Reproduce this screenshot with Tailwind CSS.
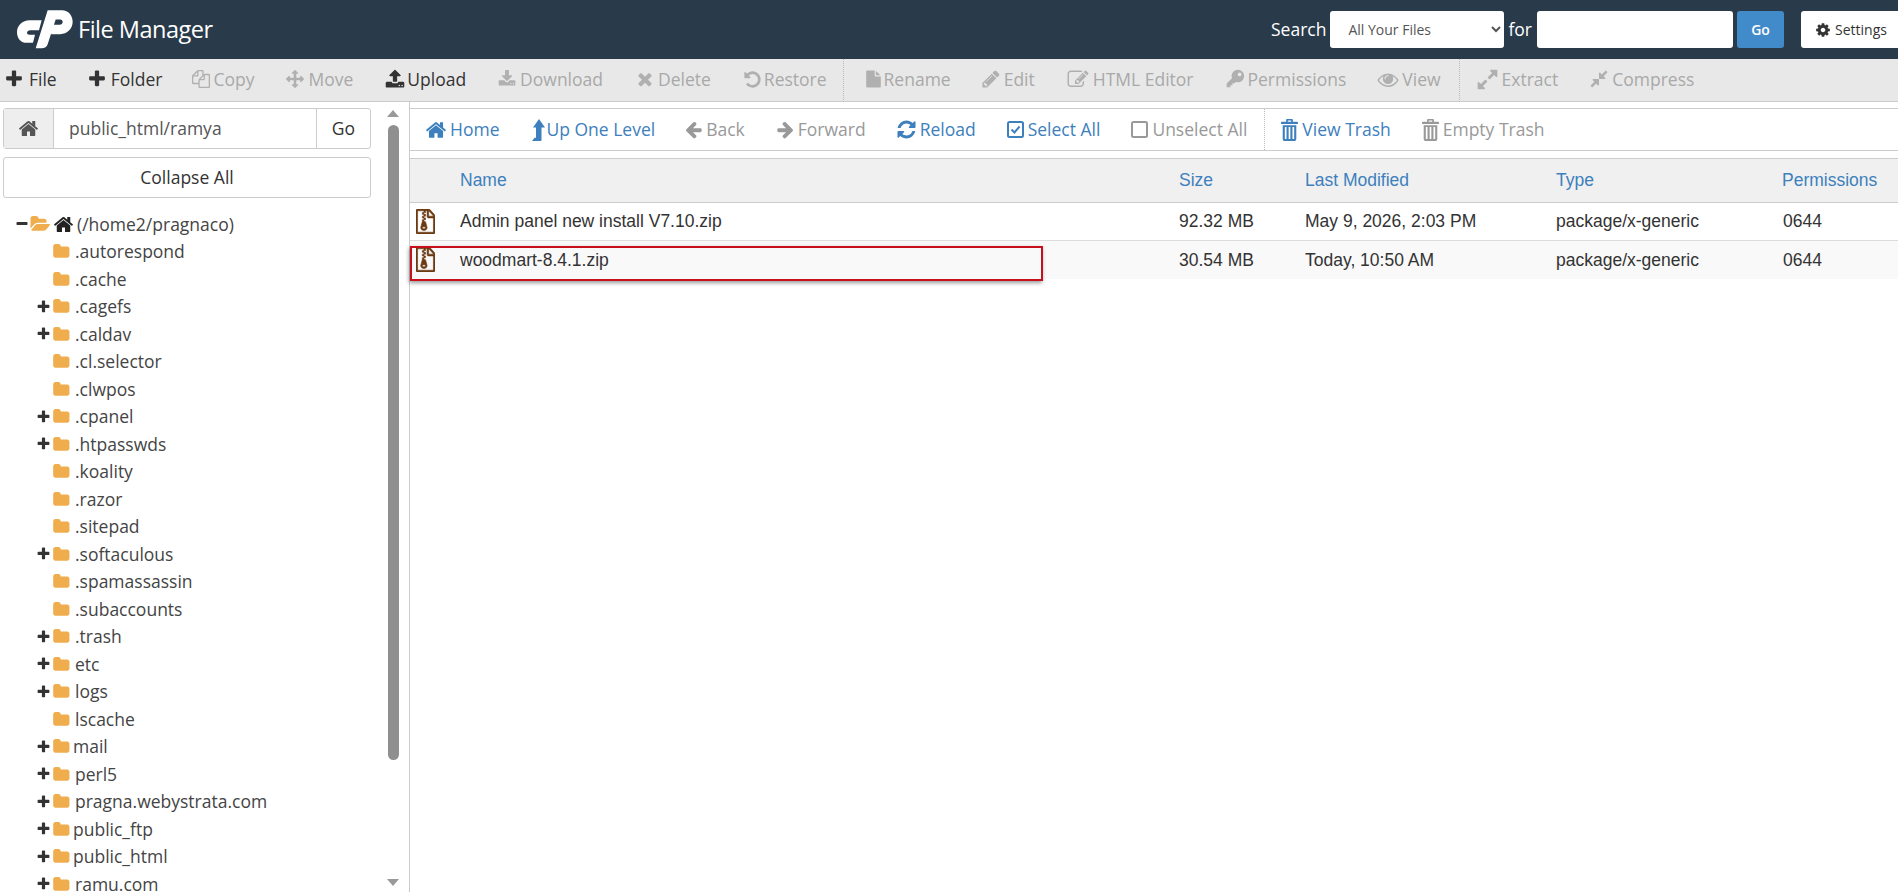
<!DOCTYPE html>
<html lang="en">
<head>
  <meta charset="UTF-8" />
  <title>File Manager</title>
  <script src="https://cdn.jsdelivr.net/npm/@tailwindcss/browser@4"></script>
</head>
<body class="bg-white h-screen overflow-hidden font-['Open_Sans',sans-serif] text-[#333]">

  <!-- icon sprite -->
  <svg class="hidden">
    <symbol id="home" viewBox="0 0 1792 1792"><path d="M1472 992v480q0 26-19 45t-45 19h-384v-384h-256v384h-384q-26 0-45-19t-19-45v-480q0-1 .5-3t.5-3l575-474 575 474q1 2 1 6zm223-69l-62 74q-8 9-21 11h-3q-13 0-21-7l-692-577-692 577q-12 8-24 7-13-2-21-11l-62-74q-8-10-7-23.500t11-21.500l719-599q32-26 76-26t76 26l244 204v-195q0-14 9-23t23-9h192q14 0 23 9t9 23v408l219 182q10 8 11 21.500t-7 23.500z"/></symbol>
    <symbol id="plus" viewBox="0 0 1792 1792"><path d="M1600 736v192q0 40-28 68t-68 28h-416v416q0 40-28 68t-68 28h-192q-40 0-68-28t-28-68v-416h-416q-40 0-68-28t-28-68v-192q0-40 28-68t68-28h416v-416q0-40 28-68t68-28h192q40 0 68 28t28 68v416h416q40 0 68 28t28 68z"/></symbol>
    <symbol id="minus" viewBox="0 0 1792 1792"><path d="M1600 736v192q0 40-28 68t-68 28h-1216q-40 0-68-28t-28-68v-192q0-40 28-68t68-28h1216q40 0 68 28t28 68z"/></symbol>
    <symbol id="folder" viewBox="0 0 1728 1536"><path transform="translate(0 -128)" d="M1728 608v704q0 92-66 158t-158 66h-1216q-92 0-158-66t-66-158v-960q0-92 66-158t158-66h320q92 0 158 66t66 158v32h672q92 0 158 66t66 158z"/></symbol>
    <symbol id="folder-open" viewBox="0 0 1920 1536"><path transform="translate(0 -128)" d="M1879 952q0 31-31 66l-336 396q-43 51-120.500 86.500t-143.500 35.500h-1088q-34 0-60.500-13t-26.500-43q0-31 31-66l336-396q43-51 120.500-86.500t143.500-35.500h1088q34 0 60.500 13t26.500 43zm-343-344v160h-832q-94 0-197 47.500t-164 119.500l-337 396-5 6q0-4-.5-12.500t-.5-12.500v-960q0-92 66-158t158-66h320q92 0 158 66t66 158v32h544q92 0 158 66t66 158z"/></symbol>
    <symbol id="copy" viewBox="0 0 1792 1792"><path d="M1696 384q40 0 68 28t28 68v1216q0 40-28 68t-68 28h-960q-40 0-68-28t-28-68v-288h-544q-40 0-68-28t-28-68v-672q0-40 20-88t48-76l408-408q28-28 76-48t88-20h416q40 0 68 28t28 68v328q68-40 128-40h416zm-544 213l-299 299h299v-299zm-640-384l-299 299h299v-299zm196 647l316-316v-416h-384v416q0 40-28 68t-68 28h-416v640h512v-256q0-40 20-88t48-76zm956 804v-1152h-384v416q0 40-28 68t-68 28h-416v640h896z"/></symbol>
    <symbol id="move" viewBox="0 0 1792 1792"><path d="M1792 896q0 26-19 45l-256 256q-19 19-45 19t-45-19-19-45v-128h-384v384h128q26 0 45 19t19 45-19 45l-256 256q-19 19-45 19t-45-19l-256-256q-19-19-19-45t19-45 45-19h128v-384h-384v128q0 26-19 45t-45 19-45-19l-256-256q-19-19-19-45t19-45l256-256q19-19 45-19t45 19 19 45v128h384v-384h-128q-26 0-45-19t-19-45 19-45l256-256q19-19 45-19t45 19l256 256q19 19 19 45t-19 45-45 19h-128v384h384v-128q0-26 19-45t45-19 45 19l256 256q19 19 19 45z"/></symbol>
    <symbol id="upload" viewBox="0 0 1792 1792"><path d="M1344 1472q0-26-19-45t-45-19-45 19-19 45 19 45 45 19 45-19 19-45zm256 0q0-26-19-45t-45-19-45 19-19 45 19 45 45 19 45-19 19-45zm128-224v320q0 40-28 68t-68 28h-1472q-40 0-68-28t-28-68v-320q0-40 28-68t68-28h427q21 56 70.500 92t110.500 36h256q61 0 110.500-36t70.500-92h427q40 0 68 28t28 68zm-325-648q-17 40-59 40h-256v448q0 26-19 45t-45 19h-256q-26 0-45-19t-19-45v-448h-256q-42 0-59-40-17-39 14-69l448-448q18-19 45-19t45 19l448 448q31 30 14 69z"/></symbol>
    <symbol id="download" viewBox="0 0 1792 1792"><path d="M1344 1344q0-26-19-45t-45-19-45 19-19 45 19 45 45 19 45-19 19-45zm256 0q0-26-19-45t-45-19-45 19-19 45 19 45 45 19 45-19 19-45zm128-224v320q0 40-28 68t-68 28h-1472q-40 0-68-28t-28-68v-320q0-40 28-68t68-28h465l135 136q58 56 136 56t136-56l136-136h464q40 0 68 28t28 68zm-325-569q17 41-14 70l-448 448q-18 19-45 19t-45-19l-448-448q-31-29-14-70 17-39 59-39h256v-448q0-26 19-45t45-19h256q26 0 45 19t19 45v448h256q42 0 59 39z"/></symbol>
    <symbol id="times" viewBox="0 0 1792 1792"><path d="M1490 1322q0 40-28 68l-136 136q-28 28-68 28t-68-28l-294-294-294 294q-28 28-68 28t-68-28l-136-136q-28-28-28-68t28-68l294-294-294-294q-28-28-28-68t28-68l136-136q28-28 68-28t68 28l294 294 294-294q28-28 68-28t68 28l136 136q28 28 28 68t-28 68l-294 294 294 294q28 28 28 68z"/></symbol>
    <symbol id="undo" viewBox="0 0 1792 1792"><path d="M1664 896q0 156-61 298t-164 245-245 164-298 61q-172 0-327-72.500t-264-204.500q-7-10-6.500-22.500t8.500-20.500l137-138q10-9 25-9 16 2 23 12 73 95 179 147t225 52q104 0 198.500-40.500t163.500-109.500 109.500-163.500 40.500-198.500-40.500-198.500-109.500-163.500-163.500-109.500-198.500-40.500q-98 0-188 35.500t-160 101.500l137 138q31 30 14 69-17 40-59 40h-448q-26 0-45-19t-19-45v-448q0-42 40-59 39-17 69 14l130 129q107-101 244.500-156.500t284.500-55.500q156 0 298 61t245 164 164 245 61 298z"/></symbol>
    <symbol id="file" viewBox="0 0 1792 1792"><path d="M1152 512v-472q22 14 36 28l408 408q14 14 28 36h-472zm-128 32q0 40 28 68t68 28h544v1056q0 40-28 68t-68 28h-1344q-40 0-68-28t-28-68v-1600q0-40 28-68t68-28h800v544z"/></symbol>
    <symbol id="pencil" viewBox="0 0 1792 1792"><path d="M491 1536l91-91-235-235-91 91v107h128v128h107zm523-928q0-22-22-22-10 0-17 7l-542 542q-7 7-7 17 0 22 22 22 10 0 17-7l542-542q7-7 7-17zm-54-192l416 416-832 832h-416v-416zm683 96q0 53-37 90l-166 166-416-416 166-165q36-38 90-38 53 0 91 38l235 234q37 39 37 91z"/></symbol>
    <symbol id="edit" viewBox="0 0 1792 1792"><path d="M888 1184l116-116-152-152-116 116v56h96v96h56zm440-720q-16-16-33 1l-350 350q-17 17-1 33t33-1l350-350q17-17 1-33zm80 594v190q0 119-84.500 203.500t-203.500 84.500h-832q-119 0-203.500-84.500t-84.500-203.500v-832q0-119 84.500-203.500t203.500-84.500h832q63 0 117 25 15 7 18 23 3 17-9 29l-49 49q-14 14-32 8-23-6-45-6h-832q-66 0-113 47t-47 113v832q0 66 47 113t113 47h832q66 0 113-47t47-113v-126q0-13 9-22l64-64q15-15 35-7t20 29zm-96-738l288 288-672 672h-288v-288zm444 132l-92 92-288-288 92-92q28-28 68-28t68 28l152 152q28 28 28 68t-28 68z"/></symbol>
    <symbol id="key" viewBox="0 0 24 24"><path fill-rule="evenodd" d="M15.500 1A7.500 7.500 0 1 1 13 15.600L11.500 17H9v2.500H6.500V22H2v-4.500l6.400-6.400A7.500 7.500 0 0 1 15.500 1zM17.500 4.300a2.200 2.200 0 1 0 0 4.400 2.200 2.200 0 0 0 0-4.400z"/></symbol>
    <symbol id="eye" viewBox="0 0 1792 1792"><path d="M1664 960q-152-236-381-353 61 104 61 225 0 185-131.500 316.500t-316.500 131.500-316.500-131.500-131.500-316.500q0-121 61-225-229 117-381 353 133 205 333.500 326.500t434.500 121.500 434.500-121.500 333.500-326.500zm-720-384q0-20-14-34t-34-14q-125 0-214.500 89.500t-89.500 214.500q0 20 14 34t34 14 34-14 14-34q0-86 61-147t147-61q20 0 34-14t14-34zm848 384q0 34-20 69-140 230-376.500 368.500t-499.500 138.500-499.500-139-376.500-368q-20-35-20-69t20-69q140-229 376.500-368t499.500-139 499.500 139 376.500 368q20 35 20 69z"/></symbol>
    <symbol id="expand" viewBox="0 0 1792 1792"><path d="M883 1056q0 13-10 23l-332 332 144 144q19 19 19 45t-19 45-45 19h-448q-26 0-45-19t-19-45v-448q0-26 19-45t45-19 45 19l144 144 332-332q10-10 23-10t23 10l114 114q10 10 10 23zm781-864v448q0 26-19 45t-45 19-45-19l-144-144-332 332q-10 10-23 10t-23-10l-114-114q-10-10-10-23t10-23l332-332-144-144q-19-19-19-45t19-45 45-19h448q26 0 45 19t19 45z"/></symbol>
    <symbol id="compress" viewBox="0 0 1792 1792"><path d="M896 960v448q0 26-19 45t-45 19-45-19l-144-144-332 332q-10 10-23 10t-23-10l-114-114q-10-10-10-23t10-23l332-332-144-144q-19-19-19-45t19-45 45-19h448q26 0 45 19t19 45zm755-672q0 13-10 23l-332 332 144 144q19 19 19 45t-19 45-45 19h-448q-26 0-45-19t-19-45v-448q0-26 19-45t45-19 45 19l144 144 332-332q10-10 23-10t23 10l114 114q10 10 10 23z"/></symbol>
    <symbol id="cog" viewBox="0 0 1792 1792"><path d="M1152 896q0-106-75-181t-181-75-181 75-75 181 75 181 181 75 181-75 75-181zm512-109v222q0 12-8 23t-20 13l-185 28q-19 54-39 91 35 50 107 138 10 12 10 25t-9 23q-27 37-99 108t-94 71q-12 0-26-9l-138-108q-44 23-91 38-16 136-29 186-7 28-36 28h-222q-14 0-24.500-8.500t-11.500-21.500l-28-184q-49-16-90-37l-141 107q-10 9-25 9-14 0-25-11-126-114-165-168-7-10-7-23 0-12 8-23 15-21 51-66.500t54-70.500q-27-50-41-99l-183-27q-13-2-21-12.500t-8-23.500v-222q0-12 8-23t19-13l186-28q14-46 39-92-40-57-107-138-10-12-10-24 0-10 9-23 26-36 98.500-107.500t94.500-71.500q13 0 26 10l138 107q44-23 91-38 16-136 29-186 7-28 36-28h222q14 0 24.500 8.500t11.500 21.500l28 184q49 16 90 37l142-107q9-9 24-9 13 0 25 10 129 119 165 170 7 8 7 22 0 12-8 23-15 21-51 66.500t-54 70.500q26 50 41 98l183 28q13 2 21 12.500t8 23.500z"/></symbol>
    <symbol id="level-up" viewBox="0 0 14 21" preserveAspectRatio="none"><path d="M8 0l6 8h-3.500v12a1 1 0 0 1-1 1H1l2.500-3H5V8H2z"/></symbol>
    <symbol id="arrow-left" viewBox="0 0 1792 1792"><path d="M1664 896v128q0 53-32.500 90.500t-84.500 37.500h-704l293 294q38 36 38 90t-38 90l-75 76q-38 38-90 38-53 0-90-38l-651-652q-38-36-38-90 0-53 38-91l651-650q38-38 90-38 52 0 90 38l75 74q38 38 38 91t-38 91l-293 293h704q52 0 84.500 37.500t32.500 90.500z"/></symbol>
    <symbol id="refresh" viewBox="0 0 1792 1792"><path d="M1639 1056q0 5-1 7-64 268-268 434.500t-478 166.500q-146 0-282.500-55t-243.500-157l-129 129q-19 19-45 19t-45-19-19-45v-448q0-26 19-45t45-19h448q26 0 45 19t19 45-19 45l-137 137q71 66 161 102t187 36q134 0 250-65t186-179q11-17 53-117 8-23 30-23h192q13 0 22.500 9.500t9.500 22.500zm25-800v448q0 26-19 45t-45 19h-448q-26 0-45-19t-19-45 19-45l138-138q-148-137-349-137-134 0-250 65t-186 179q-11 17-53 117-8 23-30 23h-199q-13 0-22.500-9.500t-9.500-22.500v-7q65-268 270-434.500t480-166.500q146 0 284 55.500t245 156.500l130-129q19-19 45-19t45 19 19 45z"/></symbol>
    <symbol id="trash" viewBox="0 0 20 24" preserveAspectRatio="none"><path fill-rule="evenodd" d="M7 1h6a1 1 0 0 1 1 1v2h5a1 1 0 0 1 1 1v1.200H0V5a1 1 0 0 1 1-1h5V2a1 1 0 0 1 1-1zM8 2.600V4h4V2.600zM2 7.500h16V22a2 2 0 0 1-2 2H4a2 2 0 0 1-2-2zM4.500 9.500V22h2V9.500zM9 9.500V22h2V9.500zM13.500 9.500V22h2V9.500z"/></symbol>
    <symbol id="zip" viewBox="128 0 1536 1792" preserveAspectRatio="none"><path stroke-width="45" d="M768 384v-128h-128v128h128zm128 128v-128h-128v128h128zm-128 128v-128h-128v128h128zm128 128v-128h-128v128h128zm700-388q28 28 48 76t20 88v1152q0 40-28 68t-68 28h-1344q-40 0-68-28t-28-68v-1600q0-40 28-68t68-28h896q40 0 88 20t76 48zm-444-244v376h376q-10-29-22-41l-313-313q-12-12-41-22zm384 1528v-1024h-416q-40 0-68-28t-28-68v-416h-128v128h-128v-128h-512v1536h1280zm-627-721l107 349q8 27 8 52 0 83-72.500 137.500t-183.500 54.500-183.500-54.500-72.500-137.500q0-25 8-52 21-63 120-396v-128h128v128h79q22 0 39 13t23 34zm-141 465q53 0 90.500-19t37.500-45-37.500-45-90.500-19-90.500 19-37.500 45 37.500 45 90.500 19z"/></symbol>
  </svg>

  <!-- Top bar -->
  <header class="h-[59px] bg-[#293a4a] flex items-center overflow-hidden pl-[17px] text-white">
    <svg class="w-[56px] h-[39px] shrink-0" viewBox="20 12 168 116" fill="#fff">
      <path d="M58 42H94L86 72H60C54 72 50 76 50 80C50 84 53 86 57 86H74L68 110H50C32 110 20 97 20 78C20 57 36 42 58 42Z"/>
      <path d="M112 12H155C175 12 187 28 187 47C187 68 170 84 150 84H122L130 56H148C153 56 157 52 157 47C157 43 154 40 150 40H136L112 114Q108 126 94 126H76Z"/>
    </svg>
    <span class="ml-[5px] text-[23.5px] tracking-[-0.5px]">File Manager</span>
    <div class="ml-auto flex items-center mr-[-3px]">
      <span class="text-[17.5px] mr-[4px]">Search</span>
      <select class="w-[174px] h-[37px] bg-white text-[#555] text-[14px] pl-[14px] pr-[5px] rounded-[3px]">
        <option>All Your Files</option>
      </select>
      <span class="text-[17.5px] ml-[4px] mr-[5px]">for</span>
      <input class="w-[196px] h-[37px] bg-white rounded-[3px]" />
      <button class="ml-[4px] w-[47px] h-[37px] bg-[#428bca] text-[14px] font-semibold rounded-[3px]">Go</button>
      <button class="ml-[17px] w-[100px] h-[37px] bg-white text-[#333] text-[14px] rounded-[3px] flex items-center pl-[14px] gap-[4px]">
        <svg class="w-[16px] h-[16px]" fill="#333"><use href="#cog"/></svg>Settings
      </button>
    </div>
  </header>

  <!-- Action toolbar -->
  <nav class="h-[43px] bg-[#e8e8e8] border-b border-[#ccc] flex items-center pl-[4px] pb-[2px] text-[17.5px] text-[#333]">
    <a class="flex items-center gap-[5px]"><svg class="w-[20px] h-[20px]" fill="#333"><use href="#plus"/></svg>File</a>
    <a class="flex items-center gap-[4px] ml-[30px]"><svg class="w-[20px] h-[20px]" fill="#333"><use href="#plus"/></svg>Folder</a>
    <div class="flex items-center gap-[32px] ml-[30px] text-[#a9a9a9]">
      <a class="flex items-center gap-[3px]"><svg class="w-[18px] h-[18px]" fill="#b0b0b0"><use href="#copy"/></svg>Copy</a>
      <a class="flex items-center gap-[4px]"><svg class="w-[18px] h-[18px]" fill="#b0b0b0"><use href="#move"/></svg>Move</a>
      <a class="flex items-center gap-[2px] text-[#333]"><svg class="w-[20px] h-[20px]" fill="#333"><use href="#upload"/></svg>Upload</a>
      <a class="flex items-center gap-[4px]"><svg class="w-[18px] h-[18px]" fill="#b0b0b0"><use href="#download"/></svg>Download</a>
      <a class="flex items-center gap-[3px]"><svg class="w-[20px] h-[20px]" fill="#b0b0b0"><use href="#times"/></svg>Delete</a>
      <a class="flex items-center gap-[2px]"><svg class="w-[19px] h-[19px]" fill="#b0b0b0"><use href="#undo"/></svg>Restore</a>
    </div>
    <div class="h-[43px] mb-[-2px] border-l border-dotted border-[#bbb] ml-[16px]"></div>
    <div class="flex items-center ml-[21px] text-[#a9a9a9]">
      <a class="flex items-center gap-[2px]"><svg class="w-[17px] h-[20px]" fill="#b0b0b0"><use href="#file"/></svg>Rename</a>
      <a class="flex items-center gap-[3px] ml-[30px]"><svg class="w-[20px] h-[20px]" fill="#b0b0b0"><use href="#pencil"/></svg>Edit</a>
      <a class="flex items-center gap-[4px] ml-[32px]"><svg class="w-[22px] h-[21px]" fill="#b0b0b0"><use href="#edit"/></svg>HTML Editor</a>
      <a class="flex items-center gap-[3px] ml-[31px]"><svg class="w-[20px] h-[20px]" fill="#b0b0b0"><use href="#key"/></svg>Permissions</a>
      <a class="flex items-center gap-[3px] ml-[31px]"><svg class="w-[22px] h-[21px]" fill="#b0b0b0"><use href="#eye"/></svg>View</a>
    </div>
    <div class="h-[43px] mb-[-2px] border-l border-dotted border-[#bbb] ml-[18px]"></div>
    <div class="flex items-center gap-[31px] ml-[16px] text-[#a9a9a9]">
      <a class="flex items-center gap-[3px]"><svg class="w-[23px] h-[23px]" fill="#b0b0b0"><use href="#expand"/></svg>Extract</a>
      <a class="flex items-center gap-[3px]"><svg class="w-[20px] h-[20px]" fill="#b0b0b0"><use href="#compress"/></svg>Compress</a>
    </div>
  </nav>

  <div class="flex h-[790px]">
    <!-- Tree -->
    <aside class="w-[409px] shrink-0 flex pt-[6px] pl-[3px] overflow-hidden">
      <div class="w-[368px] shrink-0">
        <div class="flex h-[41px] border border-[#ccc] rounded-[3px] text-[17.5px]">
          <span class="w-[50px] bg-[#eee] border-r border-[#ccc] flex items-center justify-center"><svg class="w-[21px] h-[21px]" fill="#555"><use href="#home"/></svg></span>
          <span class="flex-1 flex items-center pl-[15px] text-[#555]">public_html/ramya</span>
          <span class="w-[54px] border-l border-[#ccc] flex items-center justify-center">Go</span>
        </div>
        <button class="mt-[8px] w-full h-[41px] border border-[#ccc] rounded-[3px] text-[17.5px]">Collapse All</button>
        <ul class="mt-[12.5px] text-[17.5px] text-[#444] leading-[27.5px]">
          <li class="flex items-center h-[27.5px] pl-[12px]"><svg class="w-[14px] h-[16px]" fill="#333"><use href="#minus"/></svg><svg class="ml-[1px] w-[21px] h-[16px]" fill="#f0ad4e"><use href="#folder-open"/></svg><svg class="ml-[2px] w-[21px] h-[21px]" fill="#222"><use href="#home"/></svg><span class="ml-[3px]">(/home2/pragnaco)</span></li>
          <li class="flex items-center h-[27.5px] pl-[49px]"><svg class="w-[18px] h-[15px]" fill="#f0ad4e"><use href="#folder"/></svg><span class="ml-[5px]">.autorespond</span></li>
          <li class="flex items-center h-[27.5px] pl-[49px]"><svg class="w-[18px] h-[15px]" fill="#f0ad4e"><use href="#folder"/></svg><span class="ml-[5px]">.cache</span></li>
          <li class="flex items-center h-[27.5px] pl-[33px]"><svg class="w-[15px] h-[16px]" fill="#333"><use href="#plus"/></svg><svg class="ml-[1px] w-[18px] h-[15px]" fill="#f0ad4e"><use href="#folder"/></svg><span class="ml-[5px]">.cagefs</span></li>
          <li class="flex items-center h-[27.5px] pl-[33px]"><svg class="w-[15px] h-[16px]" fill="#333"><use href="#plus"/></svg><svg class="ml-[1px] w-[18px] h-[15px]" fill="#f0ad4e"><use href="#folder"/></svg><span class="ml-[5px]">.caldav</span></li>
          <li class="flex items-center h-[27.5px] pl-[49px]"><svg class="w-[18px] h-[15px]" fill="#f0ad4e"><use href="#folder"/></svg><span class="ml-[5px]">.cl.selector</span></li>
          <li class="flex items-center h-[27.5px] pl-[49px]"><svg class="w-[18px] h-[15px]" fill="#f0ad4e"><use href="#folder"/></svg><span class="ml-[5px]">.clwpos</span></li>
          <li class="flex items-center h-[27.5px] pl-[33px]"><svg class="w-[15px] h-[16px]" fill="#333"><use href="#plus"/></svg><svg class="ml-[1px] w-[18px] h-[15px]" fill="#f0ad4e"><use href="#folder"/></svg><span class="ml-[5px]">.cpanel</span></li>
          <li class="flex items-center h-[27.5px] pl-[33px]"><svg class="w-[15px] h-[16px]" fill="#333"><use href="#plus"/></svg><svg class="ml-[1px] w-[18px] h-[15px]" fill="#f0ad4e"><use href="#folder"/></svg><span class="ml-[5px]">.htpasswds</span></li>
          <li class="flex items-center h-[27.5px] pl-[49px]"><svg class="w-[18px] h-[15px]" fill="#f0ad4e"><use href="#folder"/></svg><span class="ml-[5px]">.koality</span></li>
          <li class="flex items-center h-[27.5px] pl-[49px]"><svg class="w-[18px] h-[15px]" fill="#f0ad4e"><use href="#folder"/></svg><span class="ml-[5px]">.razor</span></li>
          <li class="flex items-center h-[27.5px] pl-[49px]"><svg class="w-[18px] h-[15px]" fill="#f0ad4e"><use href="#folder"/></svg><span class="ml-[5px]">.sitepad</span></li>
          <li class="flex items-center h-[27.5px] pl-[33px]"><svg class="w-[15px] h-[16px]" fill="#333"><use href="#plus"/></svg><svg class="ml-[1px] w-[18px] h-[15px]" fill="#f0ad4e"><use href="#folder"/></svg><span class="ml-[5px]">.softaculous</span></li>
          <li class="flex items-center h-[27.5px] pl-[49px]"><svg class="w-[18px] h-[15px]" fill="#f0ad4e"><use href="#folder"/></svg><span class="ml-[5px]">.spamassassin</span></li>
          <li class="flex items-center h-[27.5px] pl-[49px]"><svg class="w-[18px] h-[15px]" fill="#f0ad4e"><use href="#folder"/></svg><span class="ml-[5px]">.subaccounts</span></li>
          <li class="flex items-center h-[27.5px] pl-[33px]"><svg class="w-[15px] h-[16px]" fill="#333"><use href="#plus"/></svg><svg class="ml-[1px] w-[18px] h-[15px]" fill="#f0ad4e"><use href="#folder"/></svg><span class="ml-[5px]">.trash</span></li>
          <li class="flex items-center h-[27.5px] pl-[33px]"><svg class="w-[15px] h-[16px]" fill="#333"><use href="#plus"/></svg><svg class="ml-[1px] w-[18px] h-[15px]" fill="#f0ad4e"><use href="#folder"/></svg><span class="ml-[5px]">etc</span></li>
          <li class="flex items-center h-[27.5px] pl-[33px]"><svg class="w-[15px] h-[16px]" fill="#333"><use href="#plus"/></svg><svg class="ml-[1px] w-[18px] h-[15px]" fill="#f0ad4e"><use href="#folder"/></svg><span class="ml-[5px]">logs</span></li>
          <li class="flex items-center h-[27.5px] pl-[49px]"><svg class="w-[18px] h-[15px]" fill="#f0ad4e"><use href="#folder"/></svg><span class="ml-[5px]">lscache</span></li>
          <li class="flex items-center h-[27.5px] pl-[33px]"><svg class="w-[15px] h-[16px]" fill="#333"><use href="#plus"/></svg><svg class="ml-[1px] w-[18px] h-[15px]" fill="#f0ad4e"><use href="#folder"/></svg><span class="ml-[3px]">mail</span></li>
          <li class="flex items-center h-[27.5px] pl-[33px]"><svg class="w-[15px] h-[16px]" fill="#333"><use href="#plus"/></svg><svg class="ml-[1px] w-[18px] h-[15px]" fill="#f0ad4e"><use href="#folder"/></svg><span class="ml-[5px]">perl5</span></li>
          <li class="flex items-center h-[27.5px] pl-[33px]"><svg class="w-[15px] h-[16px]" fill="#333"><use href="#plus"/></svg><svg class="ml-[1px] w-[18px] h-[15px]" fill="#f0ad4e"><use href="#folder"/></svg><span class="ml-[5px]">pragna.webystrata.com</span></li>
          <li class="flex items-center h-[27.5px] pl-[33px]"><svg class="w-[15px] h-[16px]" fill="#333"><use href="#plus"/></svg><svg class="ml-[1px] w-[18px] h-[15px]" fill="#f0ad4e"><use href="#folder"/></svg><span class="ml-[3px]">public_ftp</span></li>
          <li class="flex items-center h-[27.5px] pl-[33px]"><svg class="w-[15px] h-[16px]" fill="#333"><use href="#plus"/></svg><svg class="ml-[1px] w-[18px] h-[15px]" fill="#f0ad4e"><use href="#folder"/></svg><span class="ml-[3px]">public_html</span></li>
          <li class="flex items-center h-[27.5px] pl-[33px]"><svg class="w-[15px] h-[16px]" fill="#333"><use href="#plus"/></svg><svg class="ml-[1px] w-[18px] h-[15px]" fill="#f0ad4e"><use href="#folder"/></svg><span class="ml-[5px]">ramu.com</span></li>
        </ul>
      </div>
      <!-- scrollbar -->
      <div class="w-[12px] ml-[16px] flex flex-col items-center">
        <span class="mt-[2px] border-x-[6px] border-x-transparent border-b-[7px] border-b-[#999]"></span>
        <span class="mt-[8px] w-[11px] h-[635px] rounded-full bg-[#8f8f8f]"></span>
        <span class="mt-[119px] border-x-[6px] border-x-transparent border-t-[7px] border-t-[#999]"></span>
      </div>
    </aside>

    <!-- File list -->
    <main class="flex-1 border-l border-[#ccc] pt-[6px] relative">
      <div class="h-[43px] border-y border-[#ccc] flex items-center pl-[15px] text-[17.5px] text-[#3d80bd]">
        <div class="flex items-center">
          <a class="flex items-center gap-[3px]"><svg class="w-[22px] h-[22px]" fill="#3d80bd"><use href="#home"/></svg>Home</a>
          <a class="flex items-center gap-[1px] ml-[32px]"><svg class="w-[14px] h-[22px]" fill="#3d80bd"><use href="#level-up"/></svg>Up One Level</a>
          <a class="flex items-center gap-[3px] ml-[29px] text-[#999]"><svg class="w-[19px] h-[19px]" fill="#999"><use href="#arrow-left"/></svg>Back</a>
          <a class="flex items-center gap-[3px] ml-[31px] text-[#999]"><svg class="w-[19px] h-[19px] -scale-x-100" fill="#999"><use href="#arrow-left"/></svg>Forward</a>
          <a class="flex items-center gap-[3px] ml-[30px]"><svg class="w-[21px] h-[21px]" fill="#3d80bd"><use href="#refresh"/></svg>Reload</a>
          <a class="flex items-center gap-[4px] ml-[31px]"><svg class="w-[17px] h-[17px]" viewBox="0 0 17 17" fill="none" stroke="#3d80bd" stroke-width="2"><rect x="1" y="1" width="15" height="15" rx="1.5"/><path d="M4.500 8.500l3 3 5-6"/></svg>Select All</a>
          <a class="flex items-center gap-[4px] ml-[31px] text-[#999]"><svg class="w-[17px] h-[17px]" viewBox="0 0 17 17" fill="none" stroke="#999" stroke-width="2"><rect x="1" y="1" width="15" height="15" rx="1.5"/></svg>Unselect All</a>
        </div>
        <div class="h-full border-l border-dotted border-[#bbb] ml-[17px]"></div>
        <div class="flex items-center gap-[31px] ml-[16px]">
          <a class="flex items-center gap-[4px]"><svg class="w-[17px] h-[23px]" fill="#3d80bd"><use href="#trash"/></svg>View Trash</a>
          <a class="flex items-center gap-[4px] text-[#999]"><svg class="w-[17px] h-[23px]" fill="#999"><use href="#trash"/></svg>Empty Trash</a>
        </div>
      </div>

      <table class="mt-[7px] w-full table-fixed border-t border-[#ccc] font-['Liberation_Sans',sans-serif] text-[17.5px] text-[#333]">
        <colgroup>
          <col class="w-[50px]" /><col class="w-[719px]" /><col class="w-[126px]" /><col class="w-[251px]" /><col class="w-[226px]" /><col />
        </colgroup>
        <thead>
          <tr class="h-[44px] bg-[#f0f0f0] border-b border-[#ccc] text-[#3d80bd] text-left">
            <th class="font-normal"></th><th class="font-normal">Name</th><th class="font-normal">Size</th><th class="font-normal">Last Modified</th><th class="font-normal">Type</th><th class="font-normal">Permissions</th>
          </tr>
        </thead>
        <tbody>
          <tr class="h-[38px] border-b border-[#ddd]">
            <td class="pl-[6px]"><svg class="w-[19px] h-[25px]" fill="#6b3a12" stroke="#6b3a12"><use href="#zip"/></svg></td>
            <td>Admin panel new install V7.10.zip</td><td>92.32 MB</td><td>May 9, 2026, 2:03 PM</td><td>package/x-generic</td><td class="pl-[1px]">0644</td>
          </tr>
          <tr class="h-[38px] bg-[#f9f9f9]">
            <td class="pl-[6px]"><svg class="w-[19px] h-[25px]" fill="#6b3a12" stroke="#6b3a12"><use href="#zip"/></svg></td>
            <td class="pt-[1px]">woodmart-8.4.1.zip</td><td class="pt-[1px]">30.54 MB</td><td class="pt-[1px]">Today, 10:50 AM</td><td class="pt-[1px]">package/x-generic</td><td class="pt-[1px] pl-[1px]">0644</td>
          </tr>
        </tbody>
      </table>
      <!-- red highlight drawn over the row -->
      <div class="absolute left-0 top-[144px] w-[633px] h-[35px] border-[2.5px] border-[#c8101c] shadow-[-1px_2px_4px_rgba(0,0,0,0.4)]"></div>
    </main>
  </div>
</body>
</html>
